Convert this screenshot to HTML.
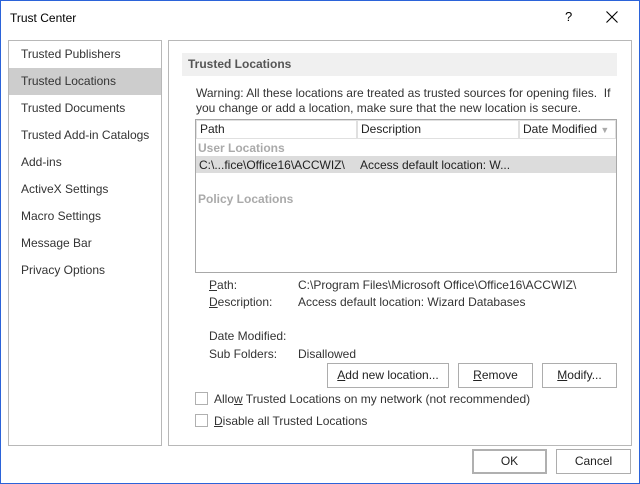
<!DOCTYPE html>
<html><head><style>
*{margin:0;padding:0;box-sizing:border-box}
body{width:640px;height:484px;background:#fff;font-family:"Liberation Sans",sans-serif;font-size:12px;color:#222;position:relative;overflow:hidden}
.a{position:absolute;white-space:nowrap}
.btn{position:absolute;border:1px solid #adadad;background:#fff;text-align:center;line-height:23px;color:#222}
.cb{position:absolute;width:13px;height:13px;border:1px solid #b0b0b0;background:#fff}
u{text-decoration:underline}
</style></head><body>
<div class="a" style="left:0;top:0;width:640px;height:484px;border:1px solid #2b63d9"></div>
<div class="a" style="left:10px;top:11px;font-size:12px;color:#000">Trust Center</div>
<div class="a" style="left:565px;top:9px;font-size:13px;color:#000">?</div>
<svg class="a" style="left:606px;top:11px" width="12" height="12"><path d="M0.5 0.5L11.5 11.5M11.5 0.5L0.5 11.5" stroke="#000" stroke-width="1.1"/></svg>

<div class="a" style="left:8px;top:40px;width:154px;height:406px;border:1px solid #b8b8b8"></div>
<div class="a" style="left:9px;top:68px;width:152px;height:27px;background:#cdcdcd"></div>
<div class="a" style="left:21px;top:41px;line-height:27px;color:#333">Trusted Publishers<br>Trusted Locations<br>Trusted Documents<br>Trusted Add-in Catalogs<br>Add-ins<br>ActiveX Settings<br>Macro Settings<br>Message Bar<br>Privacy Options</div>

<div class="a" style="left:168px;top:40px;width:464px;height:406px;border:1px solid #b8b8b8"></div>
<div class="a" style="left:182px;top:53px;width:435px;height:23px;background:#f0f0f0"></div>
<div class="a" style="left:188px;top:56px;font-weight:bold;color:#555;line-height:16px">Trusted Locations</div>
<div class="a" style="left:196px;top:86px;line-height:15px;color:#333">Warning: All these locations are treated as trusted sources for opening files.&nbsp; If<br>you change or add a location, make sure that the new location is secure.</div>

<div class="a" style="left:195px;top:119px;width:422px;height:154px;border:1px solid #a8a8a8"></div>
<div class="a" style="left:196px;top:120px;width:420px;height:19px;background:#e0e0e0"></div>
<div class="a" style="left:197px;top:121px;width:159px;height:17px;background:#fff;padding-left:3px;line-height:17px">Path</div>
<div class="a" style="left:358px;top:121px;width:160px;height:17px;background:#fff;padding-left:3px;line-height:17px">Description</div>
<div class="a" style="left:520px;top:121px;width:95px;height:17px;background:#fff;padding-left:3px;line-height:17px">Date Modified <span style="color:#aaa;font-size:9px">▼</span></div>
<div class="a" style="left:198px;top:140px;font-weight:bold;color:#aaa;line-height:16px">User Locations</div>
<div class="a" style="left:196px;top:156px;width:420px;height:17px;background:#dcdcdc"></div>
<div class="a" style="left:199px;top:157px;line-height:16px">C:\...fice\Office16\ACCWIZ\</div>
<div class="a" style="left:360px;top:157px;line-height:16px">Access default location: W...</div>
<div class="a" style="left:198px;top:191px;font-weight:bold;color:#aaa;line-height:16px">Policy Locations</div>

<div class="a" style="left:209px;top:277px;line-height:17px;color:#333"><u>P</u>ath:<br><u>D</u>escription:</div>
<div class="a" style="left:298px;top:277px;line-height:17px;color:#333">C:\Program Files\Microsoft Office\Office16\ACCWIZ\<br>Access default location: Wizard Databases</div>
<div class="a" style="left:209px;top:327px;line-height:18px;color:#333">Date Modified:<br>Sub Folders:</div>
<div class="a" style="left:298px;top:345px;line-height:18px;color:#333">Disallowed</div>

<div class="btn" style="left:327px;top:363px;width:122px;height:25px"><u>A</u>dd new location...</div>
<div class="btn" style="left:458px;top:363px;width:75px;height:25px"><u>R</u>emove</div>
<div class="btn" style="left:542px;top:363px;width:75px;height:25px"><u>M</u>odify...</div>

<div class="cb" style="left:195px;top:392px"></div>
<div class="a" style="left:214px;top:392px;line-height:15px;color:#333">Allo<u>w</u> Trusted Locations on my network (not recommended)</div>
<div class="cb" style="left:195px;top:414px"></div>
<div class="a" style="left:214px;top:414px;line-height:15px;color:#333"><u>D</u>isable all Trusted Locations</div>

<div class="btn" style="left:472px;top:449px;width:75px;height:25px;border:2px solid #b0b0b0;line-height:21px">OK</div>
<div class="btn" style="left:556px;top:449px;width:75px;height:25px">Cancel</div>
</body></html>
